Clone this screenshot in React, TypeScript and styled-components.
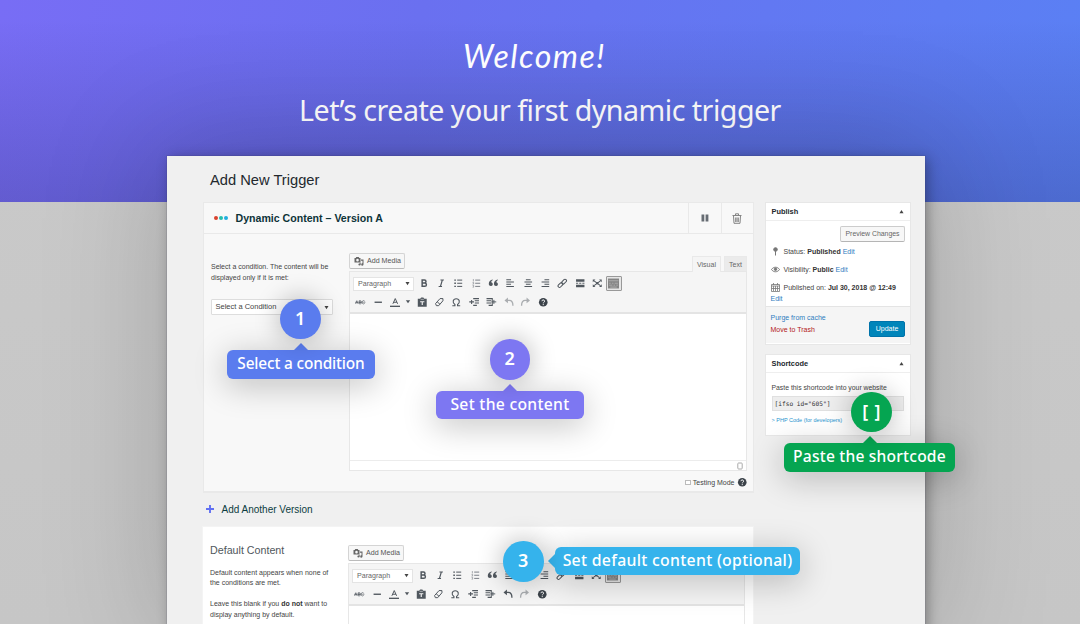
import React from "react";
import styled, { createGlobalStyle, css } from "styled-components";

const Global = createGlobalStyle`
  * { box-sizing: border-box; }
  body { margin: 0; background: #c6c6c6; }
`;

const ARIAL = `"Liberation Sans", Arial, sans-serif`;
const HUMANIST = `"Noto Sans", "Open Sans", sans-serif`;

const Page = styled.div`
  position: relative;
  width: 1080px;
  height: 624px;
  overflow: hidden;
  background: linear-gradient(#cacaca, #c6c6c6);
  font-family: ${ARIAL};
  color: #444;
  font-size: 7px;
`;

const Banner = styled.header`
  height: 202px;
  background:
    linear-gradient(rgba(20, 20, 60, 0) 10%, rgba(20, 20, 60, 0.2) 100%),
    linear-gradient(100deg, #786df5 0%, #6a70f0 38%, #5a80f4 100%);
  color: #fff;
  text-align: center;
  display: flex;
  flex-direction: column;
  align-items: center;
`;

const Welcome = styled.div`
  margin: 36px 11px 0 0;
  height: 40px;
  font: italic 400 32px/40px Lato, cursive;
  letter-spacing: 1.5px;
`;

const Headline = styled.h1`
  margin: 13.5px 0 0;
  font: 400 28.6px/40px ${HUMANIST};
  letter-spacing: -0.5px;
`;

const Panel = styled.main`
  position: relative;
  width: 758px;
  height: 480px;
  margin: -46px 0 0 167px;
  padding-top: 13px;
  background: #f0f0f0;
  box-shadow: 0 0 0 1px rgba(60, 60, 90, 0.12), 3px 2px 12px rgba(0, 0, 0, 0.3), 0 0 110px 10px rgba(0, 0, 0, 0.17);
`;

const PageTitle = styled.h2`
  margin: 0 0 0 43px;
  font: 400 14.7px/22px ${ARIAL};
  color: #23282d;
`;

const Columns = styled.div`
  display: flex;
  align-items: flex-start;
  margin-top: 11px;
  padding-left: 35px;
  gap: 11px;
`;

const MainColumn = styled.div`
  width: 552px;
`;

const SideColumn = styled.aside`
  width: 146px;
  display: flex;
  flex-direction: column;
  gap: 9px;
`;

const Card = styled.section<{ $plain?: boolean }>`
  margin-left: ${(p) => (p.$plain ? 0 : 1)}px;
  height: ${(p) => (p.$plain ? 110 : 291)}px;
  background: ${(p) => (p.$plain ? "#fff" : "#f8f8f8")};
  border: 1px solid ${(p) => (p.$plain ? "#f4f4f4" : "#e9e9e9")};
  border-bottom-width: ${(p) => (p.$plain ? 1 : 2)}px;
`;

const CardHeader = styled.div`
  display: flex;
  align-items: stretch;
  height: 31px;
  border-bottom: 1px solid #e9e9e9;
`;

const Dots = styled.div`
  display: flex;
  align-items: center;
  gap: 0.4px;
  margin-left: 10px;
  width: 21.5px;
`;

const Dot = styled.span<{ $color: string }>`
  width: 4.4px;
  height: 4.4px;
  border-radius: 50%;
  background: ${(p) => p.$color};
`;

const CardTitle = styled.h3`
  flex: 1;
  margin: 0;
  font: 700 10.6px/30px ${ARIAL};
  color: #0d3338;
`;

const HeaderButton = styled.div`
  width: 32.3px;
  display: flex;
  align-items: center;
  justify-content: center;
  border-left: 1px solid #e9e9e9;
`;

const CardBody = styled.div<{ $top: number }>`
  display: flex;
  padding: ${(p) => p.$top}px 6px 0 7px;
`;

const Notes = styled.div<{ $top: number; $w: number }>`
  flex: none;
  width: ${(p) => p.$w}px;
  margin-top: ${(p) => p.$top}px;
  line-height: 10.6px;
  p { margin: 0; white-space: nowrap; }
  b { color: #333; }
`;

const NotesTitle = styled.h4`
  margin: 0 0 11px;
  font: 400 10.7px/14px ${ARIAL};
  color: #50575c;
`;

const ConditionSelect = styled.div`
  display: flex;
  align-items: center;
  justify-content: space-between;
  width: 122px;
  height: 16px;
  margin-top: 16px;
  padding: 0 3px 0 3.5px;
  border: 1px solid #ddd;
  border-radius: 1px;
  background: #fff;
  font-size: 7.5px;
`;

const Editor = styled.div<{ $w: number }>`
  width: ${(p) => p.$w}px;
`;

const EditorTop = styled.div`
  display: flex;
  height: 18px;
`;

const MediaButton = styled.div`
  display: flex;
  align-items: center;
  gap: 3px;
  height: 16px;
  width: 56px;
  padding-left: 4px;
  border: 1px solid #d4d4d4;
  border-bottom-color: #bbb;
  border-radius: 2px;
  background: #f7f7f7;
  color: #555;
  font-size: 7.1px;
  white-space: nowrap;
`;

const Tab = styled.div<{ $active?: boolean }>`
  align-self: flex-end;
  height: ${(p) => (p.$active ? 16 : 15)}px;
  width: ${(p) => (p.$active ? 29 : 23)}px;
  margin-left: ${(p) => (p.$active ? "auto" : "3px")};
  margin-bottom: ${(p) => (p.$active ? -1 : 0)}px;
  border: 1px solid #e9e9e9;
  border-bottom: 0;
  background: ${(p) => (p.$active ? "#f5f5f5" : "#ebebeb")};
  color: #666;
  text-align: center;
  line-height: 15px;
`;

const EditorBox = styled.div<{ $h: number }>`
  height: ${(p) => p.$h}px;
  display: flex;
  flex-direction: column;
  border: 1px solid #e7e7e7;
  background: #fff;
`;

const Toolbar = styled.div`
  height: 42px;
  padding: 2.3px 2px 0;
  background: #f5f5f5;
  border-bottom: 2px solid #e4e4e4;
`;

const ToolRow = styled.div<{ $second?: boolean }>`
  display: flex;
  align-items: center;
  height: 18.5px;
  padding-left: ${(p) => (p.$second ? 0 : 1)}px;
`;

const FormatSelect = styled.div`
  display: flex;
  align-items: center;
  justify-content: space-between;
  width: 61px;
  height: 14px;
  margin-right: 1.2px;
  padding: 0 3px 0 4px;
  border: 1px solid #e4e4e4;
  background: #fff;
  color: #666;
  font-size: 7.1px;
`;

const Tool = styled.div<{ $w?: number; $pressed?: boolean; $dim?: boolean }>`
  display: flex;
  align-items: center;
  justify-content: center;
  flex: none;
  width: ${(p) => p.$w ?? 17.35}px;
  height: 16px;
  opacity: ${(p) => (p.$dim ? 0.45 : 1)};
  ${(p) =>
    p.$pressed &&
    css`
      width: 16px;
      height: 15px;
      border: 1px solid #999;
      border-radius: 1px;
      background: #e6e6e6;
    `}
`;

const StatusBar = styled.div`
  display: flex;
  align-items: center;
  justify-content: flex-end;
  height: 10px;
  margin-top: auto;
  padding-right: 3px;
  border-top: 1px solid #ececec;
`;

const TestingMode = styled.div`
  display: flex;
  align-items: center;
  justify-content: flex-end;
  gap: 2px;
  margin-top: 6px;
  height: 11px;
`;

const Checkbox = styled.span`
  width: 5.5px;
  height: 5.5px;
  border: 1px solid #bbb;
  background: #fff;
`;

const AddVersion = styled.div`
  display: flex;
  align-items: center;
  gap: 7.5px;
  height: 33px;
  padding: 0 0 1px 4px;
  font-size: 10px;
  color: #0d3d42;
`;

const Box = styled.section<{ $h: number }>`
  height: ${(p) => p.$h}px;
  background: #fff;
  border: 1px solid #e7e7e7;
`;

const BoxHeader = styled.div`
  display: flex;
  align-items: center;
  justify-content: space-between;
  height: 18px;
  padding: 0 6px 0 5.5px;
  border-bottom: 1px solid #eee;
  color: #23282d;
  font: 700 7.4px/17px ${ARIAL};
`;

const PreviewButton = styled.div`
  width: 65px;
  height: 16px;
  margin: 5px 5px 0 auto;
  border: 1px solid #ccc;
  border-bottom-color: #b5b5b5;
  border-radius: 2px;
  background: #f7f7f7;
  color: #666;
  font-size: 6.9px;
  line-height: 14px;
  text-align: center;
  white-space: nowrap;
`;

const MetaRow = styled.div`
  display: flex;
  align-items: center;
  height: 18px;
  padding: 0 0 0 5px;
  white-space: nowrap;
  svg { margin-right: 3.5px; }
  b { color: #333; }
`;

const Link = styled.span<{ $danger?: boolean }>`
  color: ${(p) => (p.$danger ? "#b32020" : "#2f7dc0")};
`;

const DateEdit = styled.div`
  padding-left: 4.5px;
  margin-top: -2px;
  line-height: 10px;
`;

const BoxFooter = styled.div`
  display: flex;
  justify-content: space-between;
  height: 37px;
  margin-top: 2px;
  padding: 5px 5px 0 4.5px;
  border-top: 1px solid #e4e4e4;
  background: #f5f5f5;
  line-height: 11.6px;
`;

const UpdateButton = styled.div`
  align-self: flex-start;
  width: 36px;
  height: 16px;
  margin-top: 9px;
  border-radius: 2px;
  border: 1px solid #0073aa;
  background: #0085ba;
  color: #fff;
  line-height: 14px;
  text-align: center;
`;

const ShortcodeBody = styled.div`
  padding: 10px 5px 0 5.5px;
  line-height: 10px;
  font-size: 6.85px;
  white-space: nowrap;
`;

const CodeField = styled.div`
  width: 132px;
  height: 15px;
  margin: 3px 0 5.5px;
  padding-left: 2px;
  border: 1px solid #e0e0e0;
  background: #eee;
  color: #333;
  font: 6.2px/13.5px "DejaVu Sans Mono", monospace;
`;

const PhpLink = styled.div`
  color: #2a95cf;
  font-size: 5.5px;
  line-height: 7px;
`;

const Badge = styled.div<{ $x: number; $y: number; $color: string; $track?: number }>`
  position: absolute;
  left: ${(p) => p.$x}px;
  top: ${(p) => p.$y}px;
  width: 40.5px;
  height: 40.5px;
  border-radius: 50%;
  background: ${(p) => p.$color};
  box-shadow: 0 0 24px 3px rgba(0, 0, 0, 0.22);
  color: #fff;
  font: 600 18px/39px ${HUMANIST};
  letter-spacing: ${(p) => p.$track ?? 0}px;
  text-indent: ${(p) => p.$track ?? 0}px;
  text-align: center;
`;

const Callout = styled.div<{ $x: number; $y: number; $w: number; $color: string; $side?: boolean; $track: number; $tip?: number; $size?: number }>`
  position: absolute;
  left: ${(p) => p.$x}px;
  top: ${(p) => p.$y}px;
  width: ${(p) => p.$w}px;
  height: 28.5px;
  border-radius: 6px;
  background: ${(p) => p.$color};
  box-shadow: 0 6px 32px 2px rgba(0, 0, 0, 0.22);
  color: #fff;
  font: 500 ${(p) => p.$size ?? 16}px/27.5px ${HUMANIST};
  letter-spacing: ${(p) => p.$track}px;
  text-align: center;
  white-space: nowrap;
  &::before {
    content: "";
    position: absolute;
    border: 8px solid transparent;
    ${(p) =>
      p.$side
        ? css`left: -15px; top: 6px; border-right-color: ${p.$color};`
        : css`left: ${p.$tip}px; top: -15px; border-bottom-color: ${p.$color};`}
  }
`;

const INK = "#50575e";

type IconName =
  | "bold" | "italic" | "ul" | "ol" | "quote" | "left" | "center" | "right" | "link" | "more"
  | "expand" | "kitchen" | "strike" | "hr" | "color" | "caret" | "paste" | "eraser" | "omega"
  | "outdent" | "indent" | "undo" | "redo" | "help";

const glyphs: Record<IconName, React.ReactNode> = {
  bold: <path d="M6 4h4.500a2.700 2.700 0 0 1 0 5.600H6zM6 9.600h5a3.100 3.100 0 0 1 0 6.200H6z" strokeWidth="2.800" />,
  italic: <path d="M8.500 3.800h6.500M5 16.200h6.500M12 4l-3.500 12" strokeWidth="2.300" />,
  ul: <><path d="M8 4h9.500M8 10h9.500M8 16h9.500" strokeWidth="1.900" /><path d="M2.500 4h3M2.500 10h3M2.500 16h3" strokeWidth="2.600" /></>,
  ol: <g stroke="#7a8087"><path d="M8 4h9.500M8 10h9.500M8 16h9.500" strokeWidth="1.900" /><path d="M4.500 2v4.500M3 8.500h2v3H3M3 14h2v3.500H3" strokeWidth="1.200" /></g>,
  quote: <path d="M9 4.500C7 5.200 6.300 6.500 6.300 8A3.800 3.800 0 1 1 1.500 12C1.200 7.500 4 3.700 9 3zM18.800 4.500c-2 .7-2.700 2-2.700 3.500a3.800 3.800 0 1 1-4.800 4c-.3-4.500 2.500-8.300 7.500-9z" fill={INK} stroke="none" />,
  left: <path d="M2.500 3.500h9M2.500 7.700h14.500M2.500 11.900h9M2.500 16.100h14.500" strokeWidth="2" />,
  center: <path d="M5.500 3.500h9M2.800 7.700h14.500M5.500 11.900h9M2.800 16.100h14.500" strokeWidth="2" />,
  right: <path d="M8.500 3.500h9M3 7.700h14.500M8.500 11.900h9M3 16.100h14.500" strokeWidth="2" />,
  link: <><rect x="8.200" y="4.300" width="10.500" height="5.500" rx="2.700" transform="rotate(-45 13.400 7)" strokeWidth="2" /><rect x="1.300" y="10.700" width="10.500" height="5.500" rx="2.700" transform="rotate(-45 6.500 13.400)" strokeWidth="2" /></>,
  more: <><path d="M2 4.800h16M2 15.200h16" strokeWidth="4.600" /><path d="M2 10h4M8 10h4M14 10h4" strokeWidth="1.800" /></>,
  expand: <><path d="M4 5.500l12 9M16 5.500l-12 9" strokeWidth="2" /><path d="M1.500 3h5l-5 5zM18.500 3h-5l5 5zM1.500 17h5l-5-5zM18.500 17h-5l5-5z" fill={INK} stroke="none" /><circle cx="10" cy="10" r="2.200" fill={INK} stroke="none" /></>,
  kitchen: <><rect x="0" y="1" width="20" height="18" fill="#858585" stroke="none" /><path d="M1 5h18M2 9.500h3M7 9.500h3M12 9.500h6M2 13h6M10 13h3M15 13h3M4 16.500h12" stroke="#c6c6c6" strokeWidth="1.100" /></>,
  strike: <><path d="M1 13L3.500 7 6 13M2 11h3M8 7v6h2.500a1.500 1.500 0 0 0 0-3H8h2.300a1.500 1.500 0 0 0 0-3zM18.500 8a3 3 0 1 0 0 4" strokeWidth="1.300" /><path d="M0 10h20" strokeWidth="1" /></>,
  hr: <path d="M3 10h14" strokeWidth="2.600" />,
  color: <><path d="M5.500 13L10 3l4.500 10M7 10h6" strokeWidth="1.900" /><path d="M0 18h20" strokeWidth="3" /></>,
  caret: <path d="M4.500 6h11L10 14z" fill={INK} stroke="none" />,
  paste: <><path d="M1.500 3.500h4.500l2-2.500h4l2 2.500h4.500V18.500h-17z" fill={INK} stroke="none" /><path d="M6 9h8M10 9v6" stroke="#f5f5f5" strokeWidth="2.200" /><path d="M7 4.500h6" stroke="#f5f5f5" strokeWidth="1" /></>,
  eraser: <path d="M3 12.500L11.500 3H17v4.200L9 16.500H4.500zM6 9l5.500 5" strokeWidth="1.900" />,
  omega: <path d="M2.500 16.800h5v-2.400C2 11 3.500 3.200 10 3.200s8 7.800 2.500 11.200v2.400h5" strokeWidth="2.100" />,
  outdent: <><path d="M8 3h11M11 7.200h8M11 11.400h8M8 16h7" strokeWidth="2.200" /><path d="M0.500 9.300h9M5 5.500v7.600" strokeWidth="2" /></>,
  indent: <><path d="M1 3h11M1 7.200h9M1 11.400h9M5 16h7" strokeWidth="2.200" /><path d="M10.500 9.300h9M15 5.500v7.600M12 2v15" strokeWidth="1.800" /></>,
  undo: <><path d="M5 6.500h5c4.500 0 7 3 7 10" strokeWidth="2.500" /><path d="M7.500 1v11L1 6.500z" fill={INK} stroke="none" /></>,
  redo: <><path d="M15 6.500h-5c-4.500 0-7 3-7 10" strokeWidth="2.500" /><path d="M12.500 1v11L19 6.500z" fill={INK} stroke="none" /></>,
  help: <><circle cx="10" cy="10" r="8.200" fill="#3c434a" stroke="none" /><path d="M7.500 8a2.500 2.500 0 1 1 3.500 2.300c-.8.400-1 .8-1 1.700M10 13.500v2" stroke="#fff" strokeWidth="1.800" /></>,
};

const Icon = ({ name, size = 10.5 }: { name: IconName; size?: number }) => (
  <svg width={size} height={size} viewBox="0 0 20 20" fill="none" stroke={INK}>
    {glyphs[name]}
  </svg>
);

const Caret = ({ up }: { up?: boolean }) => (
  <svg width="5" height="5" viewBox="0 0 10 10" fill="#444">
    <path d={up ? "M1 8.500h8L5 2z" : "M1 2h8L5 8.500z"} />
  </svg>
);

const topTools: IconName[] = ["bold", "italic", "ul", "ol", "quote", "left", "center", "right", "link", "more", "expand"];

const EditorArea = ({ height, width, tabs, undoActive }: { height: number; width: number; tabs?: boolean; undoActive?: boolean }) => (
  <Editor $w={width}>
    <EditorTop>
      <MediaButton>
        <svg width="10" height="10" viewBox="0 0 20 20" fill="#666">
          <path fillRule="evenodd" d="M1 4h2.500l1-2h5l1 2H13v9H1zM7 5.700a2.600 2.600 0 1 0 0 5.200 2.600 2.600 0 0 0 0-5.200z" />
          <path d="M14 7h5v10a2.300 2.300 0 1 1-2-2.300V9.500h-3z" />
          <circle cx="11" cy="17" r="2.200" />
          <path d="M11.500 13.500h1.700V17h-1.700z" />
        </svg>
        Add Media
      </MediaButton>
      {tabs && <Tab $active>Visual</Tab>}
      {tabs && <Tab>Text</Tab>}
    </EditorTop>
    <EditorBox $h={height}>
      <Toolbar>
        <ToolRow>
          <FormatSelect>Paragraph<Caret /></FormatSelect>
          {topTools.map((n) => (
            <Tool key={n}><Icon name={n} /></Tool>
          ))}
          <Tool $pressed><Icon name="kitchen" size={11} /></Tool>
        </ToolRow>
        <ToolRow $second>
          <Tool><Icon name="strike" /></Tool>
          <Tool><Icon name="hr" /></Tool>
          <Tool $w={17}><Icon name="color" size={10.5} /></Tool>
          <Tool $w={8}><Icon name="caret" size={9.5} /></Tool>
          <Tool $w={21.5}><Icon name="paste" /></Tool>
          <Tool $w={12.500}><Icon name="eraser" /></Tool>
          <Tool $w={22}><Icon name="omega" /></Tool>
          <Tool $w={13.500}><Icon name="outdent" /></Tool>
          <Tool $w={20.5}><Icon name="indent" /></Tool>
          <Tool $w={14.5} $dim={!undoActive}><Icon name="undo" /></Tool>
          <Tool $w={19} $dim><Icon name="redo" /></Tool>
          <Tool $w={16}><Icon name="help" /></Tool>
        </ToolRow>
      </Toolbar>
      {tabs && (
        <StatusBar>
          <svg width="6" height="8" viewBox="0 0 6 8" fill="none" stroke="#aaa">
            <rect x="0.800" y="1" width="4.400" height="6" rx="0.800" />
          </svg>
        </StatusBar>
      )}
    </EditorBox>
  </Editor>
);

export default function App() {
  return (
    <Page>
      <Global />
      <Banner>
        <Welcome>Welcome!</Welcome>
        <Headline>Let’s create your first dynamic trigger</Headline>
      </Banner>
      <Panel>
        <PageTitle>Add New Trigger</PageTitle>
        <Columns>
          <MainColumn>
            <Card>
              <CardHeader>
                <Dots>
                  <Dot $color="#d8432f" />
                  <Dot $color="#25bfae" />
                  <Dot $color="#22aee0" />
                </Dots>
                <CardTitle>Dynamic Content – Version A</CardTitle>
                <HeaderButton>
                  <svg width="8" height="8" viewBox="0 0 8 8" fill="#666c73">
                    <path d="M0.500 0.500h2.800v7H0.500zM4.600 0.500h2.800v7H4.600z" />
                  </svg>
                </HeaderButton>
                <HeaderButton>
                  <svg width="10" height="11" viewBox="0 0 10 11" fill="none" stroke="#777">
                    <path d="M0.500 2.500h9M3.500 2V0.800h3V2M1.500 3l.5 7.300h6L8.500 3M3.700 4.500v4.500M5 4.500v4.500M6.300 4.500v4.500" strokeWidth="0.900" />
                  </svg>
                </HeaderButton>
              </CardHeader>
              <CardBody $top={19}>
                <Notes $top={9} $w={138}>
                  <p>Select a condition. The content will be</p>
                  <p>displayed only if it is met:</p>
                  <ConditionSelect>Select a Condition<Caret /></ConditionSelect>
                </Notes>
                <div>
                  <EditorArea height={200} width={398} tabs />
                  <TestingMode>
                    <Checkbox />
                    Testing Mode
                    <Icon name="help" />
                  </TestingMode>
                </div>
              </CardBody>
            </Card>
            <AddVersion>
              <svg width="8" height="8" viewBox="0 0 8 8" stroke="#6170f2" strokeWidth="1.900">
                <path d="M4 0v8M0 4h8" />
              </svg>
              Add Another Version
            </AddVersion>
            <Card $plain>
              <CardBody $top={18}>
                <Notes $top={-2.500} $w={138}>
                  <NotesTitle>Default Content</NotesTitle>
                  <p>Default content appears when none of</p>
                  <p>the conditions are met.</p>
                  <br />
                  <p>Leave this blank if you <b>do not</b> want to</p>
                  <p>display anything by default.</p>
                </Notes>
                <EditorArea height={80} width={397} undoActive />
              </CardBody>
            </Card>
          </MainColumn>
          <SideColumn>
            <Box $h={143}>
              <BoxHeader>Publish<Caret up /></BoxHeader>
              <PreviewButton>Preview Changes</PreviewButton>
              <MetaRow>
                <svg width="9" height="9" viewBox="0 0 9 9" stroke="#777" fill="#777">
                  <circle cx="4.500" cy="2.500" r="1.800" />
                  <path d="M4.500 4v4.500" />
                </svg>
                <span>Status: <b>Published</b> <Link>Edit</Link></span>
              </MetaRow>
              <MetaRow>
                <svg width="9" height="9" viewBox="0 0 9 9" stroke="#777" fill="none">
                  <path d="M0.500 4.500C2.500 1.500 6.500 1.500 8.500 4.500 6.500 7.500 2.500 7.500 0.500 4.500z" />
                  <circle cx="4.500" cy="4.300" r="1.200" fill="#777" />
                </svg>
                <span>Visibility: <b>Public</b> <Link>Edit</Link></span>
              </MetaRow>
              <MetaRow>
                <svg width="9" height="9" viewBox="0 0 9 9" stroke="#777" fill="none">
                  <path d="M0.500 1.500h8v7h-8zM0.500 3h8M2.500 0v2M6.500 0v2M2.500 3v5M4.500 3v5M6.500 3v5M0.500 5.500h8" strokeWidth="0.800" />
                </svg>
                <span>Published on: <b>Jul 30, 2018 @ 12:49</b></span>
              </MetaRow>
              <DateEdit><Link>Edit</Link></DateEdit>
              <BoxFooter>
                <div>
                  <Link>Purge from cache</Link>
                  <br />
                  <Link $danger>Move to Trash</Link>
                </div>
                <UpdateButton>Update</UpdateButton>
              </BoxFooter>
            </Box>
            <Box $h={82}>
              <BoxHeader>Shortcode<Caret up /></BoxHeader>
              <ShortcodeBody>
                Paste this shortcode into your website
                <CodeField>[ifso id="605"]</CodeField>
                <PhpLink>&gt; PHP Code (for developers)</PhpLink>
              </ShortcodeBody>
            </Box>
          </SideColumn>
        </Columns>
      </Panel>

      <Callout $x={227} $y={350} $w={148} $color="#5a7cee" $track={-0.15} $size={15.4} $tip={66}>Select a condition</Callout>
      <Badge $x={280} $y={298.500} $color="#5a7cee">1</Badge>
      <Callout $x={436} $y={390.500} $w={148} $color="#7d77f2" $track={0.3} $size={15.7} $tip={66}>Set the content</Callout>
      <Badge $x={489.500} $y={339} $color="#7d77f2">2</Badge>
      <Callout $x={784} $y={443} $w={171} $color="#05a551" $track={0.2} $size={15.6} $tip={78}>Paste the shortcode</Callout>
      <Badge $x={851} $y={391.500} $color="#05a551" $track={0.8}>[ ]</Badge>
      <Callout $x={555} $y={546.500} $w={245} $color="#35b3ec" $track={0.3} $size={15.8} $side>Set default content (optional)</Callout>
      <Badge $x={503} $y={541} $color="#35b3ec">3</Badge>
    </Page>
  );
}
